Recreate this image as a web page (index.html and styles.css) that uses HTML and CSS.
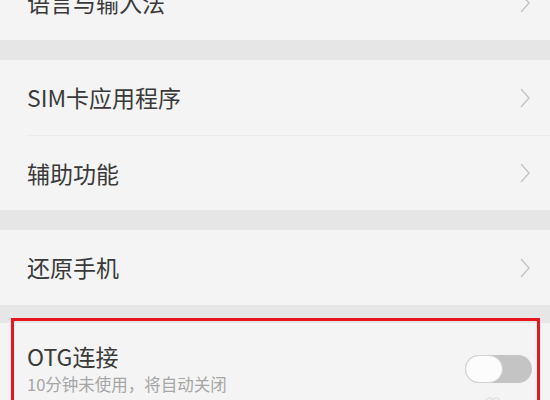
FILE: index.html
```html
<!DOCTYPE html>
<html lang="zh-CN">
<head>
  <meta charset="UTF-8" />
  <title>设置</title>
  <link rel="stylesheet" href="styles.css">
</head>
<body>
  <div class="settings">

    <div class="group group-first">
      <div class="row">
        <span class="label">语言与输入法</span>
        <svg class="chevron" viewBox="0 0 10 20"><path d="M1 1 L9 10 L1 19" /></svg>
      </div>
    </div>

    <div class="group">
      <div class="row">
        <span class="label">SIM卡应用程序</span>
        <svg class="chevron" viewBox="0 0 10 20"><path d="M1 1 L9 10 L1 19" /></svg>
      </div>
      <div class="row">
        <span class="label">辅助功能</span>
        <svg class="chevron" viewBox="0 0 10 20"><path d="M1 1 L9 10 L1 19" /></svg>
      </div>
    </div>

    <div class="group">
      <div class="row">
        <span class="label">还原手机</span>
        <svg class="chevron" viewBox="0 0 10 20"><path d="M1 1 L9 10 L1 19" /></svg>
      </div>
    </div>

    <div class="group group-last">
      <div class="row row-tall">
        <div class="text">
          <span class="label">OTG连接</span>
          <span class="hint">10分钟未使用，将自动关闭</span>
        </div>
        <div class="side">
          <div class="switch"><div class="knob"></div></div>
          <svg class="more" viewBox="0 0 16 8"><path d="M1 8 C1 3 7 3 7 6 M8 6 C8 3 15 3 15 8" /></svg>
        </div>
      </div>
      <!-- 标注框 -->
      <div class="mark"></div>
    </div>

  </div>
</body>
</html>
```

FILE: styles.css
```css
* {
  box-sizing: border-box;
}

body {
  margin: 0;
  height: 400px;
  overflow: hidden;
  background-color: #e6e6e6;
  font-family: "Noto Sans CJK SC", "Noto Sans", sans-serif;
  color: #3a3a3a;
}

.settings {
  display: flex;
  flex-direction: column;
  gap: 20px;
}

.group {
  background-color: #f4f4f4;
}

.group-first {
  margin-top: -35px;
}

.group-last {
  position: relative;
  margin-top: -2px;
  height: 120px;
}

.row {
  display: flex;
  align-items: center;
  justify-content: space-between;
  height: 75px;
  margin-left: 26px;
  padding-left: 1px;
  padding-right: 18px;
  border-top: 1px solid #ebebeb;
}

.row:first-child {
  border-top: none;
}

.label {
  font-size: 23px;
  line-height: 1;
}

.chevron {
  width: 14px;
  height: 20px;
  fill: none;
  stroke: #c4c4c4;
  stroke-width: 1.4;
}

.row-tall {
  align-items: flex-start;
  padding-top: 22px;
  padding-right: 18px;
}

.text {
  display: flex;
  flex-direction: column;
  gap: 8px;
}

.hint {
  font-size: 16.5px;
  line-height: 1;
  color: #a6a6a6;
}

.side {
  display: flex;
  flex-direction: column;
  align-items: center;
  gap: 11px;
  margin-top: 10px;
}

.switch {
  width: 67px;
  height: 28px;
  border-radius: 14px;
  background-color: #c4c4c4;
}

.knob {
  width: 38px;
  height: 28px;
  border-radius: 14px;
  background-color: #fcfcfc;
  border: 1px solid #d2d2d2;
}

.more {
  width: 16px;
  height: 8px;
  margin-right: 12px;
  fill: none;
  stroke: #e2e2e2;
  stroke-width: 1.5;
}

.mark {
  position: absolute;
  left: 11px;
  top: -5px;
  width: 529px;
  height: 140px;
  border: 3px solid #e8141e;
}
```
